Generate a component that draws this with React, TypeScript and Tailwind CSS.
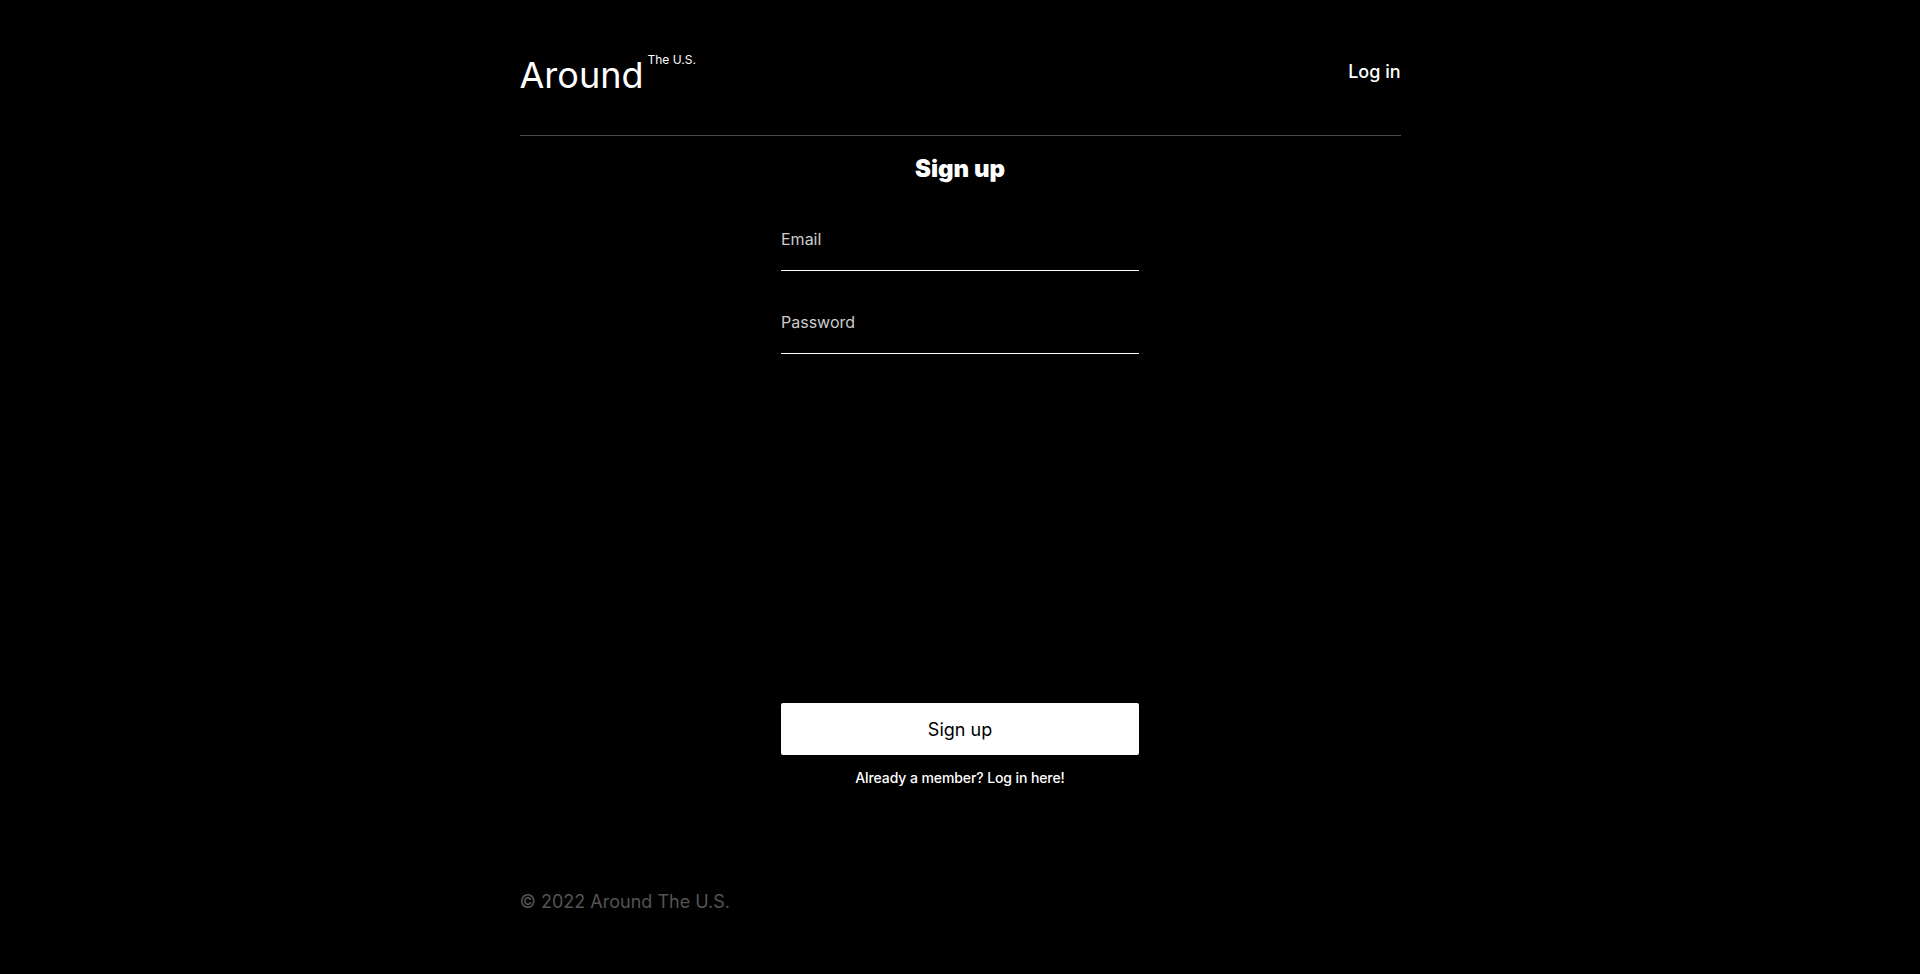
import { useState } from "react";

export default function App() {
  const [email, setEmail] = useState("");
  const [password, setPassword] = useState("");

  return (
    <div className="min-h-screen bg-black text-white font-['Inter',sans-serif]">
      <div className="w-[881px] mx-auto">
        <header className="h-[136px] flex justify-between items-start pt-[57px] border-b border-[#4a4a4a]">
          <div className="flex items-start">
            <span className="text-[36px] leading-none">Around</span>
            <span className="text-[12px] leading-none ml-1 -mt-[3px]">The U.S.</span>
          </div>
          <a href="#" className="text-[18px] leading-none font-medium mt-[6px]">
            Log in
          </a>
        </header>

        <main className="flex flex-col items-center">
          <h1 className="mt-[21px] text-[24px] leading-none font-black">Sign up</h1>

          <form className="w-[358px] flex flex-col mt-[50px]" onSubmit={(e) => e.preventDefault()}>
            <input
              type="email"
              value={email}
              onChange={(e) => setEmail(e.target.value)}
              placeholder="Email"
              className="w-full h-[40px] pb-[23px] text-[16px] leading-none bg-transparent border-b border-white text-white placeholder:text-[#cccccc] outline-none"
            />
            <input
              type="password"
              value={password}
              onChange={(e) => setPassword(e.target.value)}
              placeholder="Password"
              className="w-full h-[40px] pb-[23px] mt-[43px] text-[16px] leading-none bg-transparent border-b border-white text-white placeholder:text-[#cccccc] outline-none"
            />
            <button
              type="submit"
              className="mt-[349px] h-[52px] w-full bg-white rounded-[2px] text-[18px] text-black"
            >
              Sign up
            </button>
            <p className="mt-[16px] text-center text-[14px] leading-none font-medium tracking-[-0.1px]">
              Already a member? <a href="#">Log in here!</a>
            </p>
          </form>
        </main>

        <footer className="mt-[108px] pb-[44px] text-[18px] leading-none text-[#545454]">
          © 2022 Around The U.S.
        </footer>
      </div>
    </div>
  );
}
